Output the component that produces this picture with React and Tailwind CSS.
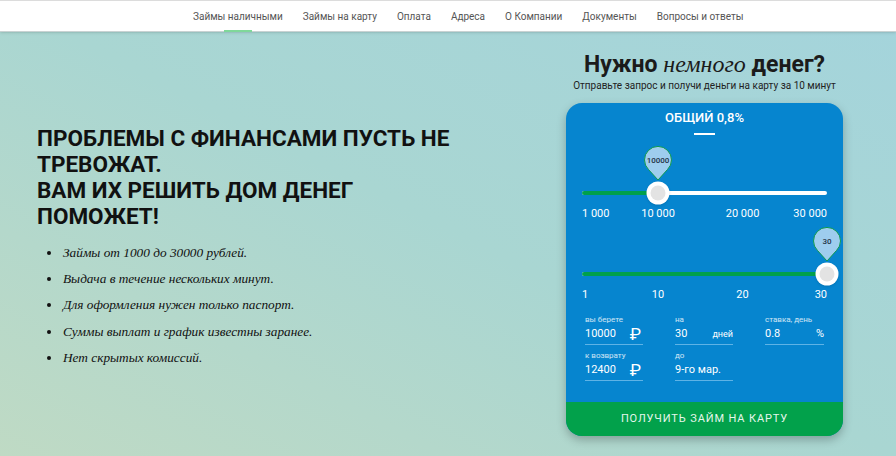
import React from "react";

const navItems = [
  "Займы наличными",
  "Займы на карту",
  "Оплата",
  "Адреса",
  "О Компании",
  "Документы",
  "Вопросы и ответы",
];

const perks = [
  "Займы от 1000 до 30000 рублей.",
  "Выдача в течение нескольких минут.",
  "Для оформления нужен только паспорт.",
  "Суммы выплат и график известны заранее.",
  "Нет скрытых комиссий.",
];

const Pin = ({ value }) => (
  <div className="relative w-[30px] h-[36px]">
    <svg viewBox="0 0 30 36" className="absolute inset-0 w-[30px] h-[36px]">
      <path
        d="M15 34 L5.5 23.5 A13.5 13.5 0 1 1 24.5 23.5 Z"
        fill="#9ecdee"
        stroke="#0f9a4e"
        strokeWidth="1"
      />
    </svg>
    <span className="absolute left-0 right-0 top-[9px] text-center text-[8px] font-medium text-[#1f3346]">
      {value}
    </span>
  </div>
);

const Slider = ({ min, max, value, ticks }) => {
  const pct = ((value - min) / (max - min)) * 100;
  return (
    <div className="flex flex-col">
      <div className="relative h-[46px]">
        <div
          className="absolute top-[1px] -translate-x-1/2"
          style={{ left: `${pct}%` }}
        >
          <Pin value={value} />
        </div>
      </div>
      <div className="relative h-[4px] rounded-full bg-white">
        <div
          className="absolute left-0 top-0 h-[4px] rounded-full bg-[#00a04c]"
          style={{ width: `${pct}%` }}
        />
        <div
          className="absolute top-1/2 -translate-x-1/2 -translate-y-1/2 w-[23px] h-[23px] rounded-full bg-white shadow flex items-center justify-center"
          style={{ left: `${pct}%` }}
        >
          <div className="w-[15px] h-[15px] rounded-full bg-[#e3e3e3]" />
        </div>
      </div>
      <div className="relative h-[13px] mt-[12px] text-[11px] leading-[13px] text-white whitespace-nowrap">
        {ticks.map((t, i) => {
          const p = ((t.v - min) / (max - min)) * 100;
          const cls =
            i === 0
              ? "absolute top-0"
              : i === ticks.length - 1
              ? "absolute top-0 -translate-x-full"
              : "absolute top-0 -translate-x-1/2";
          return (
            <span key={t.v} className={cls} style={{ left: `${p}%` }}>
              {t.label}
            </span>
          );
        })}
      </div>
    </div>
  );
};

const Field = ({ label, value, unit, unitClass }) => (
  <div className="flex flex-col">
    <span className="text-[8px] leading-[10px] text-white/80">{label}</span>
    <div className="flex items-center justify-between h-[20px] border-b border-[#5eb3e6]">
      <span className="text-[11px] text-white">{value}</span>
      {unit && <span className={unitClass}>{unit}</span>}
    </div>
  </div>
);

export default function App() {
  return (
    <div
      className="w-[896px] h-[456px] overflow-hidden flex flex-col bg-[linear-gradient(to_top_right,#bfdac4,#a9d6d2_50%,#a4d4dc)]"
      style={{ fontFamily: "Roboto, 'Liberation Sans', sans-serif" }}
    >
      <header className="h-[32px] shrink-0 bg-white border-t border-[#dcdcdc] border-b border-b-[#c9d2d2] shadow-sm flex items-stretch">
        <nav className="flex items-stretch gap-[20px] pl-[193px]">
          {navItems.map((item, i) => (
            <div key={item} className="relative flex items-center">
              <span className="text-[10px] text-[#555]">{item}</span>
              {i === 0 && (
                <span className="absolute bottom-[-1px] left-1/2 -translate-x-1/2 w-[28px] h-[2px] bg-[#7fd89a]" />
              )}
            </div>
          ))}
        </nav>
      </header>

      <main className="flex-1 flex">
        <section className="flex-1 pl-[37px] pt-[93px]">
          <h1 className="text-[22.5px] leading-[26px] font-bold text-[#111] uppercase whitespace-nowrap">
            Проблемы с финансами пусть не
            <br />
            тревожат.
            <br />
            Вам их решить Дом Денег
            <br />
            поможет!
          </h1>
          <ul
            className="mt-[16px] pl-[25px] flex flex-col gap-[10.2px] italic text-[13.3px] leading-[16px] text-[#111] list-disc"
            style={{ fontFamily: "'Liberation Serif', 'DejaVu Serif', serif" }}
          >
            {perks.map((p) => (
              <li key={p} className="pl-[1px]">{p}</li>
            ))}
          </ul>
        </section>

        <section className="w-[277px] mr-[53px] flex flex-col items-center pt-[18px]">
          <h2 className="text-[23px] leading-[28px] font-bold text-[#1b1b1b] whitespace-nowrap">
            Нужно{" "}
            <span
              className="italic font-normal text-[24px]"
              style={{ fontFamily: "'Liberation Serif', serif" }}
            >
              немного
            </span>{" "}
            денег?
          </h2>
          <p className="text-[10px] leading-[12px] text-[#222] mt-[1px] whitespace-nowrap">
            Отправьте запрос и получи деньги на карту за 10 минут
          </p>

          <div className="mt-[11px] w-full rounded-[16px] overflow-hidden bg-[#0685cf] shadow-[0_4px_10px_rgba(0,0,0,0.25)] flex flex-col">
            <div className="flex flex-col items-center pt-[7px]">
              <span className="text-[13px] leading-[16px] font-medium text-white">
                ОБЩИЙ 0,8%
              </span>
              <span className="mt-[7px] w-[21px] h-[2px] bg-white" />
            </div>

            <div className="px-[16px] pt-[10px] flex flex-col gap-[6px]">
              <Slider
                min={1000}
                max={30000}
                value={10000}
                ticks={[
                  { v: 1000, label: "1 000" },
                  { v: 10000, label: "10 000" },
                  { v: 20000, label: "20 000" },
                  { v: 30000, label: "30 000" },
                ]}
              />
              <Slider
                min={1}
                max={30}
                value={30}
                ticks={[
                  { v: 1, label: "1" },
                  { v: 10, label: "10" },
                  { v: 20, label: "20" },
                  { v: 30, label: "30" },
                ]}
              />
            </div>

            <div className="grid grid-cols-[58px_58px_59px] gap-x-[32px] gap-y-[6px] pl-[19px] pt-[14px] pb-[21px]">
              <Field
                label="вы берете"
                value="10000"
                unit="₽"
                unitClass="text-[17px] text-white leading-none mr-[2px]"
              />
              <Field
                label="на"
                value="30"
                unit="дней"
                unitClass="text-[9px] text-white"
              />
              <Field
                label="ставка, день"
                value="0.8"
                unit="%"
                unitClass="text-[11px] text-white"
              />
              <Field
                label="к возврату"
                value="12400"
                unit="₽"
                unitClass="text-[17px] text-white leading-none mr-[2px]"
              />
              <Field label="до" value="9-го мар." />
            </div>

            <button className="h-[34px] bg-[#02a14b] text-[11px] tracking-[0.08em] text-[#e6f6ec] flex items-center justify-center">
              ПОЛУЧИТЬ ЗАЙМ НА КАРТУ
            </button>
          </div>
        </section>
      </main>
    </div>
  );
}
